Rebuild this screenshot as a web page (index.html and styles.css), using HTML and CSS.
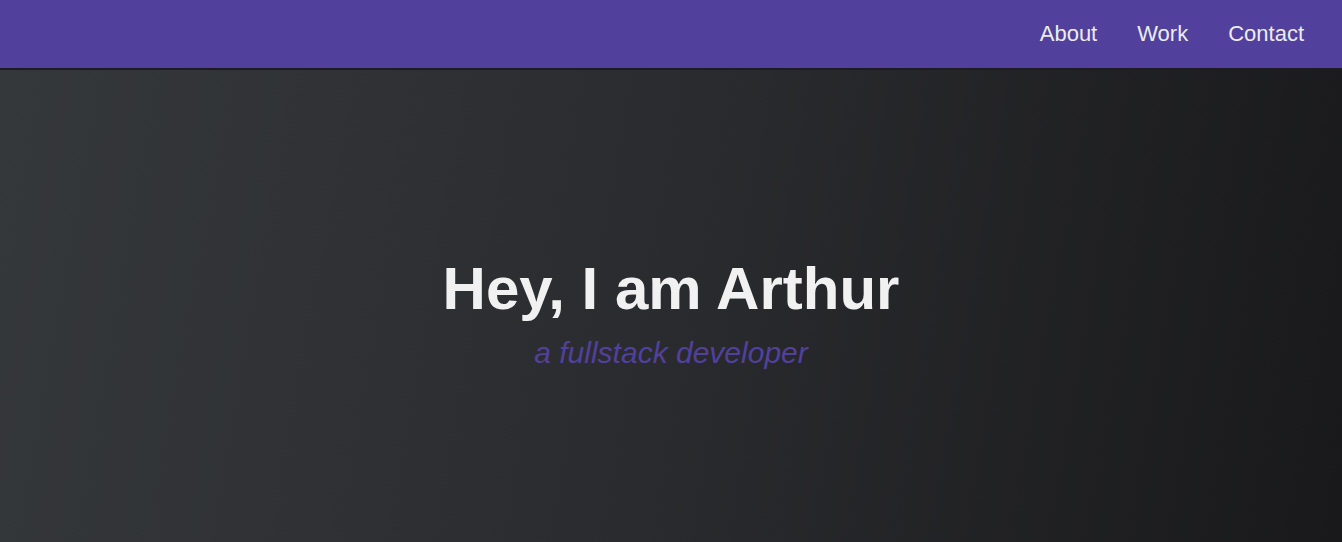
FILE: index.html
```html
<!DOCTYPE html>
<html lang="en">
<head>
<meta charset="utf-8">
<title>Arthur</title>
<link rel="stylesheet" href="styles.css">
</head>
<body>
<header class="nav">
  <nav class="nav-links">
    <a class="nav-link" href="#about">About</a>
    <a class="nav-link" href="#work">Work</a>
    <a class="nav-link" href="#contact">Contact</a>
  </nav>
</header>
<main class="hero">
  <h1 class="hero-title">Hey, I am Arthur</h1>
  <p class="hero-sub">a fullstack developer</p>
</main>
</body>
</html>
```

FILE: styles.css
```css
* { box-sizing: border-box; }
html, body { margin: 0; padding: 0; height: 100%; }
body {
  font-family: "Liberation Sans", Arial, sans-serif;
  background: #1b1b1d;
  overflow: hidden;
}
.nav {
  height: 70px;
  background: #51419c;
  border-bottom: 2px solid #1d1b24;
  display: flex;
  justify-content: flex-end;
  align-items: center;
  padding-right: 38px;
}
.nav-links {
  display: flex;
  gap: 40px;
}
.nav-link {
  color: #ecebf3;
  text-decoration: none;
  font-size: 22px;
}
.hero {
  height: calc(100vh - 70px);
  background: linear-gradient(100deg, #35383b 0%, #2a2b2e 50%, #19191b 100%);
  display: flex;
  flex-direction: column;
  align-items: center;
  justify-content: center;
  padding-top: 12px;
}
.hero-title {
  margin: 0;
  color: #f1f1f1;
  font-size: 60px;
  font-weight: 700;
  line-height: 1.2;
}
.hero-sub {
  margin: 10px 0 0;
  color: #51419c;
  font-size: 30px;
  font-style: italic;
  line-height: 1.2;
}
```
